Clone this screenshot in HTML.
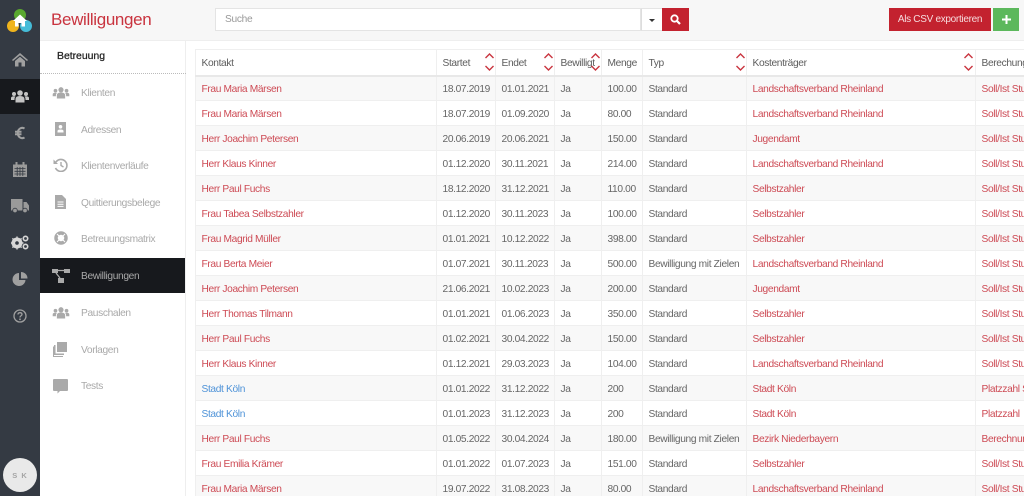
<!DOCTYPE html>
<html lang="de"><head><meta charset="utf-8"><title>Bewilligungen</title>
<style>
*{box-sizing:border-box}
html,body{margin:0;width:1024px;height:496px;overflow:hidden;background:#f7f7f7;font-family:"Liberation Sans",sans-serif;color:#555}
#root{position:absolute;left:0;top:0;width:1024px;height:496px;overflow:hidden;filter:blur(.3px)}
#rail{position:absolute;left:0;top:0;width:40px;height:496px;background:#343a43}
#rail svg{position:absolute}
#active{position:absolute;left:0;top:79px;width:40px;height:35px;background:#17191d}
#avatar{position:absolute;left:3px;top:458px;width:34px;height:34px;border-radius:50%;background:#e9e9e9;color:#a5a5a5;font-size:7.5px;font-weight:bold;text-align:center;line-height:35px;letter-spacing:1px}
#title{position:absolute;left:51px;top:9px;font-size:17px;line-height:22px;color:#c9343f;letter-spacing:-.35px;white-space:nowrap}
#side{position:absolute;left:40px;top:41px;width:146px;height:455px;background:#fff;border-right:1px solid #eee}
#side .h{position:absolute;left:17px;top:8px;font-size:10.5px;line-height:15px;color:#222;-webkit-text-stroke:.25px #222;letter-spacing:-.05px}
#side .dots{position:absolute;left:0;top:32px;width:146px;border-top:1px dotted #bbb}
.it{position:absolute;left:41px;font-size:10.2px;color:#a9a9a9;line-height:14px;white-space:nowrap;letter-spacing:-.35px}
.sel{position:absolute;left:0;top:217px;width:145px;height:35px;background:#17191d}
#side svg{position:absolute}
#search{position:absolute;left:215px;top:8px;width:426px;height:23px;background:#fff;border:1px solid #e4e4e4;font-size:10.2px;color:#999;line-height:21px;padding-left:9px;letter-spacing:-.3px}
#drop{position:absolute;left:641px;top:8px;width:22px;height:23px;background:#fff;border:1px solid #e4e4e4;border-left:1px solid #ddd}
#drop i{position:absolute;left:7px;top:10px;border:3px solid transparent;border-top:3px solid #333;border-bottom:0}
#go{position:absolute;left:662px;top:8px;width:27px;height:23px;background:#c3222f}
#csv{position:absolute;left:889px;top:8px;width:102px;height:23px;background:#c3222f;color:#f6dcde;font-size:10px;line-height:24px;text-align:center;white-space:nowrap;letter-spacing:-.3px}
#plus{position:absolute;left:993px;top:8px;width:26px;height:23px;background:#5cb85c}
#hr{position:absolute;left:40px;top:40px;width:984px;height:1px;background:#eee}
#wrap{position:absolute;left:186px;top:41px;width:838px;height:455px;background:#fff}
table{position:absolute;left:9px;top:8px;width:900px;border-collapse:collapse;table-layout:fixed;font-size:10.2px;background:#fff;letter-spacing:-.35px}
th,td{border:1px solid #efefef;padding:3px 0 0 5.5px;white-space:nowrap;overflow:hidden;font-weight:normal;text-align:left;height:25px;line-height:14px}
th{height:26px;border-bottom:2px solid #e8e8e8;position:relative;overflow:visible;color:#5c5c5c}
tbody tr:nth-child(odd) td{background:#f8f8f8}
td{color:#666}
td.r{color:#cd4a54}
td.b{color:#4f93d8}
th svg{position:absolute;top:1px}
</style></head>
<body>
<div id="root">
<div id="hr"></div>
<div id="rail">
<svg style="left:7px;top:8px" width="26" height="26" viewBox="0 0 26 26"><circle cx="13" cy="7" r="6" fill="#5aa82f"/><circle cx="6" cy="18" r="6" fill="#f0b41c"/><circle cx="19" cy="18" r="6" fill="#45bcd8"/><path d="M13 6.500 L20 13 H18 V18.500 H14.500 V15 H11.500 V18.500 H8 V13 H6Z" fill="#fff"/></svg>
<svg style="left:12px;top:52px" width="16" height="15" viewBox="0 0 16 15"><path d="M8 1 L16 8 L15 9 L8 3.200 L1 9 L0 8Z M3 9 L8 4.800 L13 9 V14.500 H9.500 V10.500 H6.500 V14.500 H3Z" fill="#a0a0a0"/></svg>
<div id="active"></div>
<svg style="left:11px;top:90px" width="18" height="13" viewBox="0 0 18 13"><circle cx="9" cy="3" r="2.800" fill="#c4c4c4"/><circle cx="3" cy="4" r="2" fill="#c4c4c4"/><circle cx="15" cy="4" r="2" fill="#c4c4c4"/><path d="M4.500 12.500V9q0-3 4.500-3t4.500 3v3.500ZM0 10V8q0-1.800 3-1.800 1 0 1.500.4-1 .8-1 2.400V10ZM18 10V8q0-1.800-3-1.800-1 0-1.500.4 1 .8 1 2.400V10Z" fill="#c4c4c4"/></svg>
<svg style="left:15px;top:126px" width="10" height="14" viewBox="0 0 10 14"><path d="M9.500 2.500A4.500 5 0 0 0 2.800 7 4.500 5 0 0 0 9.500 11.500M0 5.800H6.500M0 8.200H6.500" stroke="#a0a0a0" stroke-width="2" fill="none"/></svg>
<svg style="left:13px;top:162px" width="14" height="15" viewBox="0 0 14 15"><path d="M0 2.500H14V15H0ZM2.500 0H4.500V3H2.500ZM9.500 0H11.500V3H9.500Z" fill="#9a9a9a"/><path d="M1.500 6.500H12.500M1.500 9.300H12.500M1.500 12H12.500M4.200 5V14M7 5V14M9.800 5V14" stroke="#343a43" stroke-width=".8"/></svg>
<svg style="left:11px;top:199px" width="18" height="14" viewBox="0 0 18 14"><path d="M0 0H11.500V11.500H0ZM12.500 3H15.500L18 6.500V11.500H12.500Z" fill="#9a9a9a"/><circle cx="4" cy="11.500" r="2.300" fill="#9a9a9a" stroke="#343a43" stroke-width=".8"/><circle cx="14" cy="11.500" r="2.300" fill="#9a9a9a" stroke="#343a43" stroke-width=".8"/></svg>
<svg style="left:11px;top:235px" width="18" height="15" viewBox="0 0 18 15"><circle cx="6" cy="8" r="3.800" fill="none" stroke="#d6d6d6" stroke-width="3.400"/><path d="M6 1.500V14.500M-.5 8H12.500M1.400 3.400L10.600 12.600M10.600 3.400L1.400 12.600" stroke="#d6d6d6" stroke-width="1.400"/><circle cx="6" cy="8" r="1.800" fill="#343a43"/><circle cx="14.500" cy="3.500" r="2.200" fill="none" stroke="#d6d6d6" stroke-width="1.600"/><circle cx="14.500" cy="11.500" r="2.200" fill="none" stroke="#d6d6d6" stroke-width="1.600"/></svg>
<svg style="left:12px;top:272px" width="16" height="15" viewBox="0 0 16 15"><path d="M7 1A6.500 6.500 0 1 0 13.500 8H7Z" fill="#a0a0a0"/><path d="M9 0A6.500 6.500 0 0 1 15.500 6.500H9Z" fill="#a0a0a0"/></svg>
<svg style="left:13px;top:309px" width="14" height="14" viewBox="0 0 14 14"><circle cx="7" cy="7" r="6" fill="none" stroke="#a0a0a0" stroke-width="1.300"/><path d="M5 5.500Q5 3.700 7 3.700T9 5.400Q9 6.300 7.800 7 7 7.500 7 8.500" fill="none" stroke="#a0a0a0" stroke-width="1.300"/><circle cx="7" cy="10.300" r=".9" fill="#a0a0a0"/></svg>
<div id="avatar">S K</div>
</div>
<div id="title">Bewilligungen</div>
<div id="side">
<div class="h">Betreuung</div><div class="dots"></div>
<svg style="left:12px;top:46px" width="18" height="12" viewBox="0 0 18 13"><circle cx="9" cy="3" r="2.800" fill="#aaa"/><circle cx="3" cy="4" r="2" fill="#aaa"/><circle cx="15" cy="4" r="2" fill="#aaa"/><path d="M4.500 12.500V9q0-3 4.500-3t4.500 3v3.500ZM0 10V8q0-1.800 3-1.800 1 0 1.500.4-1 .8-1 2.400V10ZM18 10V8q0-1.800-3-1.800-1 0-1.500.4 1 .8 1 2.400V10Z" fill="#aaa"/></svg>
<div class="it" style="top:46px">Klienten</div>
<svg style="left:14px;top:81px" width="13" height="14" viewBox="0 0 13 14"><path fill-rule="evenodd" d="M1 0H12V14H1ZM6.500 3A1.800 1.800 0 1 0 6.500 6.600 1.800 1.800 0 1 0 6.500 3ZM3.500 10.500H9.500V9Q9.500 7.500 6.500 7.500T3.500 9Z" fill="#aaa"/></svg>
<div class="it" style="top:83px">Adressen</div>
<svg style="left:13px;top:117px" width="15" height="14" viewBox="0 0 15 14"><path d="M3 4A6 6 0 1 1 2.500 10" fill="none" stroke="#aaa" stroke-width="1.600"/><path d="M0.500 1.500V6H5Z" fill="#aaa"/><path d="M8 4V7.500L10.500 9" fill="none" stroke="#aaa" stroke-width="1.400"/></svg>
<div class="it" style="top:119px">Klientenverläufe</div>
<svg style="left:15px;top:154px" width="11" height="14" viewBox="0 0 11 14"><path fill-rule="evenodd" d="M0 0H7L11 4V14H0ZM2.500 6.500V7.500H8.500V6.500ZM2.500 8.700V9.700H8.500V8.700ZM2.500 10.900V11.900H8.500V10.900Z" fill="#aaa"/></svg>
<div class="it" style="top:156px">Quittierungsbelege</div>
<svg style="left:14px;top:190px" width="14" height="14" viewBox="0 0 14 14"><circle cx="7" cy="7" r="5" fill="none" stroke="#aaa" stroke-width="3.500"/><path d="M3 3L5 5M11 3L9 5M3 11L5 9M11 11L9 9" stroke="#fff" stroke-width="1"/></svg>
<div class="it" style="top:192px">Betreuungsmatrix</div>
<div class="sel"></div>
<svg style="left:12px;top:227px" width="18" height="15" viewBox="0 0 18 15"><path d="M0 1H6V5H0ZM12 1H18V5H12ZM6 10H12V15H6Z" fill="#aaa"/><path d="M6 2.500H12M4 5L8 10" stroke="#aaa" stroke-width="1.300"/></svg>
<div class="it" style="top:229px">Bewilligungen</div>
<svg style="left:12px;top:266px" width="18" height="12" viewBox="0 0 18 13"><circle cx="9" cy="3" r="2.800" fill="#aaa"/><circle cx="3" cy="4" r="2" fill="#aaa"/><circle cx="15" cy="4" r="2" fill="#aaa"/><path d="M4.500 12.500V9q0-3 4.500-3t4.500 3v3.500ZM0 10V8q0-1.800 3-1.800 1 0 1.500.4-1 .8-1 2.400V10ZM18 10V8q0-1.800-3-1.800-1 0-1.500.4 1 .8 1 2.400V10Z" fill="#aaa"/></svg>
<div class="it" style="top:266px">Pauschalen</div>
<svg style="left:13px;top:301px" width="15" height="15" viewBox="0 0 15 15"><path d="M4 0H14V10H4Z" fill="#aaa"/><path d="M2.500 3V11.500H11V13H1V3Z" fill="#aaa"/><path d="M0 4.500H1V14H10V15H0Z" fill="#aaa"/></svg>
<div class="it" style="top:303px">Vorlagen</div>
<svg style="left:13px;top:338px" width="15" height="15" viewBox="0 0 15 15"><path d="M1 0H14Q15 0 15 1V11Q15 12 14 12H7L4.500 14.500V12H1Q0 12 0 11V1Q0 0 1 0Z" fill="#aaa"/></svg>
<div class="it" style="top:339px">Tests</div>
</div>
<div id="search">Suche</div>
<div id="drop"><i></i></div>
<div id="go"><svg style="position:absolute;left:8px;top:6px" width="11" height="11" viewBox="0 0 11 11"><circle cx="4.500" cy="4.500" r="3.200" fill="none" stroke="#fff" stroke-width="1.800"/><path d="M7 7L10 10" stroke="#fff" stroke-width="2.200"/></svg></div>
<div id="csv">Als CSV exportieren</div>
<div id="plus"><svg style="position:absolute;left:9px;top:7px" width="9" height="9" viewBox="0 0 9 9"><path d="M4.500 0V9M0 4.500H9" stroke="#fff" stroke-width="2"/></svg></div>
<div id="wrap">
<table>
<colgroup><col style="width:241px"><col style="width:59px"><col style="width:59px"><col style="width:47px"><col style="width:41px"><col style="width:104px"><col style="width:229px"><col style="width:120px"></colgroup>
<thead><tr>
<th>Kontakt</th>
<th>Startet<svg style="left:47px" width="11" height="22" viewBox="0 0 11 22"><path d="M1.500 7L5.500 3 9.500 7M1.500 15L5.500 19 9.500 15" fill="none" stroke="#c9343f" stroke-width="1.400"/></svg></th>
<th>Endet<svg style="left:47px" width="11" height="22" viewBox="0 0 11 22"><path d="M1.500 7L5.500 3 9.500 7M1.500 15L5.500 19 9.500 15" fill="none" stroke="#c9343f" stroke-width="1.400"/></svg></th>
<th>Bewilligt<svg style="left:35px" width="11" height="22" viewBox="0 0 11 22"><path d="M1.500 7L5.500 3 9.500 7M1.500 15L5.500 19 9.500 15" fill="none" stroke="#c9343f" stroke-width="1.400"/></svg></th>
<th>Menge</th>
<th>Typ<svg style="left:92px" width="11" height="22" viewBox="0 0 11 22"><path d="M1.500 7L5.500 3 9.500 7M1.500 15L5.500 19 9.500 15" fill="none" stroke="#c9343f" stroke-width="1.400"/></svg></th>
<th>Kostenträger<svg style="left:216px" width="11" height="22" viewBox="0 0 11 22"><path d="M1.500 7L5.500 3 9.500 7M1.500 15L5.500 19 9.500 15" fill="none" stroke="#c9343f" stroke-width="1.400"/></svg></th>
<th>Berechung</th>
</tr></thead>
<tbody>
<tr><td class="r">Frau Maria Märsen</td><td>18.07.2019</td><td>01.01.2021</td><td>Ja</td><td>100.00</td><td>Standard</td><td class="r">Landschaftsverband Rheinland</td><td class="r">Soll/Ist Stunden</td></tr>
<tr><td class="r">Frau Maria Märsen</td><td>18.07.2019</td><td>01.09.2020</td><td>Ja</td><td>80.00</td><td>Standard</td><td class="r">Landschaftsverband Rheinland</td><td class="r">Soll/Ist Stunden</td></tr>
<tr><td class="r">Herr Joachim Petersen</td><td>20.06.2019</td><td>20.06.2021</td><td>Ja</td><td>150.00</td><td>Standard</td><td class="r">Jugendamt</td><td class="r">Soll/Ist Stunden</td></tr>
<tr><td class="r">Herr Klaus Kinner</td><td>01.12.2020</td><td>30.11.2021</td><td>Ja</td><td>214.00</td><td>Standard</td><td class="r">Landschaftsverband Rheinland</td><td class="r">Soll/Ist Stunden</td></tr>
<tr><td class="r">Herr Paul Fuchs</td><td>18.12.2020</td><td>31.12.2021</td><td>Ja</td><td>110.00</td><td>Standard</td><td class="r">Selbstzahler</td><td class="r">Soll/Ist Stunden</td></tr>
<tr><td class="r">Frau Tabea Selbstzahler</td><td>01.12.2020</td><td>30.11.2023</td><td>Ja</td><td>100.00</td><td>Standard</td><td class="r">Selbstzahler</td><td class="r">Soll/Ist Stunden</td></tr>
<tr><td class="r">Frau Magrid Müller</td><td>01.01.2021</td><td>10.12.2022</td><td>Ja</td><td>398.00</td><td>Standard</td><td class="r">Selbstzahler</td><td class="r">Soll/Ist Stunden</td></tr>
<tr><td class="r">Frau Berta Meier</td><td>01.07.2021</td><td>30.11.2023</td><td>Ja</td><td>500.00</td><td>Bewilligung mit Zielen</td><td class="r">Landschaftsverband Rheinland</td><td class="r">Soll/Ist Stunden</td></tr>
<tr><td class="r">Herr Joachim Petersen</td><td>21.06.2021</td><td>10.02.2023</td><td>Ja</td><td>200.00</td><td>Standard</td><td class="r">Jugendamt</td><td class="r">Soll/Ist Stunden</td></tr>
<tr><td class="r">Herr Thomas Tilmann</td><td>01.01.2021</td><td>01.06.2023</td><td>Ja</td><td>350.00</td><td>Standard</td><td class="r">Selbstzahler</td><td class="r">Soll/Ist Stunden</td></tr>
<tr><td class="r">Herr Paul Fuchs</td><td>01.02.2021</td><td>30.04.2022</td><td>Ja</td><td>150.00</td><td>Standard</td><td class="r">Selbstzahler</td><td class="r">Soll/Ist Stunden</td></tr>
<tr><td class="r">Herr Klaus Kinner</td><td>01.12.2021</td><td>29.03.2023</td><td>Ja</td><td>104.00</td><td>Standard</td><td class="r">Landschaftsverband Rheinland</td><td class="r">Soll/Ist Stunden</td></tr>
<tr><td class="b">Stadt Köln</td><td>01.01.2022</td><td>31.12.2022</td><td>Ja</td><td>200</td><td>Standard</td><td class="r">Stadt Köln</td><td class="r">Platzzahl Stunden</td></tr>
<tr><td class="b">Stadt Köln</td><td>01.01.2023</td><td>31.12.2023</td><td>Ja</td><td>200</td><td>Standard</td><td class="r">Stadt Köln</td><td class="r">Platzzahl</td></tr>
<tr><td class="r">Herr Paul Fuchs</td><td>01.05.2022</td><td>30.04.2024</td><td>Ja</td><td>180.00</td><td>Bewilligung mit Zielen</td><td class="r">Bezirk Niederbayern</td><td class="r">Berechnung</td></tr>
<tr><td class="r">Frau Emilia Krämer</td><td>01.01.2022</td><td>01.07.2023</td><td>Ja</td><td>151.00</td><td>Standard</td><td class="r">Selbstzahler</td><td class="r">Soll/Ist Stunden</td></tr>
<tr><td class="r">Frau Maria Märsen</td><td>19.07.2022</td><td>31.08.2023</td><td>Ja</td><td>80.00</td><td>Standard</td><td class="r">Landschaftsverband Rheinland</td><td class="r">Soll/Ist Stunden</td></tr>
</tbody>
</table>
</div>
</div>
</body></html>
